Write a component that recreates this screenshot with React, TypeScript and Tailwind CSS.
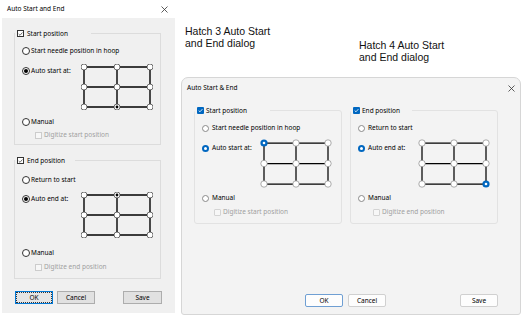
import type { ReactNode } from 'react'

type Variant = 'classic' | 'modern'

// Close glyph for the two title bars
function CloseX() {
  return (
    <svg width="7" height="7" viewBox="0 0 7 7" className="shrink-0">
      <path d="M0.5 0.5 L6.5 6.5 M6.5 0.5 L0.5 6.5" stroke="#333" strokeWidth="0.8" />
    </svg>
  )
}

function Radio({ v, on }: { v: Variant; on?: boolean }) {
  if (v === 'classic')
    return (
      <span className="flex h-[8px] w-[8px] shrink-0 items-center justify-center rounded-full border border-[#333] bg-white">
        {on && <span className="h-[4px] w-[4px] rounded-full bg-black" />}
      </span>
    )
  return on ? (
    <span className="flex h-[7px] w-[7px] shrink-0 items-center justify-center rounded-full bg-[#0067c0]">
      <span className="h-[3px] w-[3px] rounded-full bg-white" />
    </span>
  ) : (
    <span className="h-[7px] w-[7px] shrink-0 rounded-full border border-[#8a8a8a] bg-white" />
  )
}

function Check({ v, on }: { v: Variant; on?: boolean }) {
  if (!on)
    return v === 'classic' ? (
      <span className="h-[7px] w-[7px] shrink-0 border border-[#cccccc] bg-[#f7f7f7]" />
    ) : (
      <span className="h-[7px] w-[7px] shrink-0 rounded-[1px] border border-[#d4d4d4] bg-[#f7f7f7]" />
    )
  return v === 'classic' ? (
    <span className="flex h-[7px] w-[7px] shrink-0 items-center justify-center border border-[#333] bg-white">
      <svg width="6" height="6" viewBox="0 0 6 6">
        <path d="M0.8 3 L2.4 4.6 L5.3 1.2" fill="none" stroke="#222" strokeWidth="0.8" />
      </svg>
    </span>
  ) : (
    <span className="flex h-[7px] w-[7px] shrink-0 items-center justify-center rounded-[1px] bg-[#0067c0]">
      <svg width="5" height="5" viewBox="0 0 5 5">
        <path d="M0.7 2.6 L2 3.8 L4.4 1.1" fill="none" stroke="#fff" strokeWidth="0.8" />
      </svg>
    </span>
  )
}

function Opt({ v, on, className = '', children }: { v: Variant; on?: boolean; className?: string; children: ReactNode }) {
  return (
    <div className={`flex h-[10px] items-center ${v === 'classic' ? 'gap-[1px]' : 'gap-[3px]'} ${className}`}>
      <Radio v={v} on={on} />
      <span className="whitespace-nowrap">{children}</span>
    </div>
  )
}

function Digitize({ v, className = '', children }: { v: Variant; className?: string; children: ReactNode }) {
  return (
    <div className={`flex h-[10px] items-center gap-[2px] text-[#a0a0a0] ${className}`}>
      <Check v={v} />
      <span className="whitespace-nowrap">{children}</span>
    </div>
  )
}

// 3x3 stitch-position picker, sel = [col, row]
function PosGrid({ v, sel }: { v: Variant; sel: [number, number] }) {
  const modern = v === 'modern'
  const xs = modern ? [4, 36, 68] : [3, 36, 69]
  const ys = modern ? [4, 24.5, 45] : [3, 23, 43]
  const w = 72
  const h = modern ? 49 : 46
  const lw = modern ? 1.25 : 1.4
  return (
    <svg width={w} height={h} viewBox={`0 0 ${w} ${h}`} className="shrink-0">
      {ys.map((y) => (
        <line key={'h' + y} x1={xs[0]} y1={y} x2={xs[2]} y2={y} stroke="#000" strokeWidth={lw} />
      ))}
      {xs.map((x) => (
        <line key={'v' + x} x1={x} y1={ys[0]} x2={x} y2={ys[2]} stroke="#000" strokeWidth={lw} />
      ))}
      {ys.map((y, r) =>
        xs.map((x, c) => {
          const on = sel[0] === c && sel[1] === r
          if (modern)
            return on ? (
              <g key={`${c}-${r}`}>
                <circle cx={x} cy={y} r={3.6} fill="#0067c0" />
                <circle cx={x} cy={y} r={1.3} fill="#fff" />
              </g>
            ) : (
              <circle key={`${c}-${r}`} cx={x} cy={y} r={3.2} fill="#fff" stroke="#8a8a8a" strokeWidth={0.7} />
            )
          return (
            <g key={`${c}-${r}`}>
              <circle cx={x} cy={y} r={3} fill="#fff" stroke="#333" strokeWidth={0.7} />
              {on && <circle cx={x} cy={y} r={1.4} fill="#000" />}
            </g>
          )
        })
      )}
    </svg>
  )
}

function Group({ v, label, legendW, className = '', children }: { v: Variant; label: string; legendW: string; className?: string; children: ReactNode }) {
  return (
    <fieldset
      className={`border ${v === 'classic' ? 'w-[147px] border-[#dcdcdc]' : 'w-[148px] rounded-[3px] border-[#e2e2e2]'} ${className}`}
    >
      <legend className={`flex h-[9px] items-center ${v === 'classic' ? 'gap-[3px]' : 'gap-[2px]'} ${legendW}`}>
        <span className="ml-[2px] flex">
          <Check v={v} on />
        </span>
        <span className="whitespace-nowrap">{label}</span>
      </legend>
      {children}
    </fieldset>
  )
}

function ClassicDialog() {
  return (
    <section className="ml-[2px] flex h-[313px] w-[173px] shrink-0 flex-col">
      <header className="flex h-[18px] items-center justify-between bg-white pl-[5px] pr-[7px]">
        <span>Auto Start and End</span>
        <CloseX />
      </header>
      <div className="flex flex-1 flex-col bg-[#f0f0f0] pl-[12px] pr-[13px] pt-[11px]">
        <Group v="classic" label="Start position" legendW="w-[76px]">
          <div className="pb-[4px] pl-[7px]">
            <Opt v="classic" className="mt-[8px]">Start needle position in hoop</Opt>
            <div className="mt-[8px] flex">
              <div className="w-[59px] pt-[2px]">
                <Opt v="classic" on>Auto start at:</Opt>
              </div>
              <PosGrid v="classic" sel={[1, 2]} />
            </div>
            <Opt v="classic" className="mt-[7px]">Manual</Opt>
            <Digitize v="classic" className="mt-[3px] pl-[13px]">Digitize start position</Digitize>
          </div>
        </Group>

        <Group v="classic" label="End position" legendW="w-[60px]" className="mt-[11px]">
          <div className="pb-[6px] pl-[7px]">
            <Opt v="classic" className="mt-[10px]">Return to start</Opt>
            <div className="mt-[7px] flex">
              <div className="w-[59px] pt-[2px]">
                <Opt v="classic" on>Auto end at:</Opt>
              </div>
              <PosGrid v="classic" sel={[1, 0]} />
            </div>
            <Opt v="classic" className="mt-[10px]">Manual</Opt>
            <Digitize v="classic" className="mt-[4px] pl-[13px]">Digitize end position</Digitize>
          </div>
        </Group>

        <div className="mt-[12px] flex h-[13px] pl-[1px]">
          <button className="flex w-[38px] items-center justify-center border border-[#0078d7] bg-[#e5e5e5] p-[1px]">
            <span className="flex h-full w-full items-center justify-center outline outline-1 outline-dotted outline-[#333]">OK</span>
          </button>
          <button className="ml-[4px] w-[38px] border border-[#adadad] bg-[#e1e1e1]">Cancel</button>
          <button className="ml-auto w-[39px] border border-[#adadad] bg-[#e1e1e1]">Save</button>
        </div>
      </div>
    </section>
  )
}

function ModernDialog() {
  return (
    <section className="ml-[6px] flex h-[238px] w-[340px] flex-col rounded-t-[7px] rounded-b-[3px] border border-[#d6d6d6] bg-[#f3f3f3]">
      <header className="flex h-[20px] items-center justify-between pl-[5px] pr-[5px]">
        <span>Auto Start &amp; End</span>
        <CloseX />
      </header>
      <div className="flex gap-[8px] pl-[12px] pt-[8px]">
        <Group v="modern" label="Start position" legendW="w-[75px]">
          <div className="pb-[6px] pl-[7px]">
            <Opt v="modern" className="mt-[8px]">Start needle position in hoop</Opt>
            <div className="mt-[6px] flex">
              <div className="w-[58px] pt-[4px]">
                <Opt v="modern" on>Auto start at:</Opt>
              </div>
              <PosGrid v="modern" sel={[0, 0]} />
            </div>
            <Opt v="modern" className="mt-[5px]">Manual</Opt>
            <Digitize v="modern" className="mt-[4px] pl-[12px]">Digitize start position</Digitize>
          </div>
        </Group>

        <Group v="modern" label="End position" legendW="w-[61px]">
          <div className="pb-[6px] pl-[7px]">
            <Opt v="modern" className="mt-[8px]">Return to start</Opt>
            <div className="mt-[6px] flex">
              <div className="w-[60px] pt-[4px]">
                <Opt v="modern" on>Auto end at:</Opt>
              </div>
              <PosGrid v="modern" sel={[2, 2]} />
            </div>
            <Opt v="modern" className="mt-[5px]">Manual</Opt>
            <Digitize v="modern" className="mt-[4px] pl-[15px]">Digitize end position</Digitize>
          </div>
        </Group>
      </div>

      <div className="mb-[7px] mt-auto flex h-[13px] pl-[123px] pr-[22px]">
        <button className="w-[38px] rounded-[2px] border border-[#6f9fd3] bg-[#fdfdfd]">OK</button>
        <button className="ml-[5px] w-[38px] rounded-[2px] border border-[#d0d0d0] bg-[#fdfdfd]">Cancel</button>
        <button className="ml-auto w-[38px] rounded-[2px] border border-[#d0d0d0] bg-[#fdfdfd]">Save</button>
      </div>
    </section>
  )
}

export default function App() {
  return (
    <div className="flex h-[319px] w-[523px] overflow-hidden bg-white font-['Noto_Sans',sans-serif] text-[6.5px] leading-[10px] text-black">
      <ClassicDialog />
      <div className="flex w-[348px] flex-col">
        <div className="flex h-[77px] items-start pl-[10px] font-['Liberation_Sans',Arial,sans-serif] text-[10.5px] leading-[12px] text-[#111]">
          <p className="mt-[25px] w-[174px]">
            Hatch 3 Auto Start
            <br />
            and End dialog
          </p>
          <p className="mt-[39px]">
            Hatch 4 Auto Start
            <br />
            and End dialog
          </p>
        </div>
        <ModernDialog />
      </div>
    </div>
  )
}
